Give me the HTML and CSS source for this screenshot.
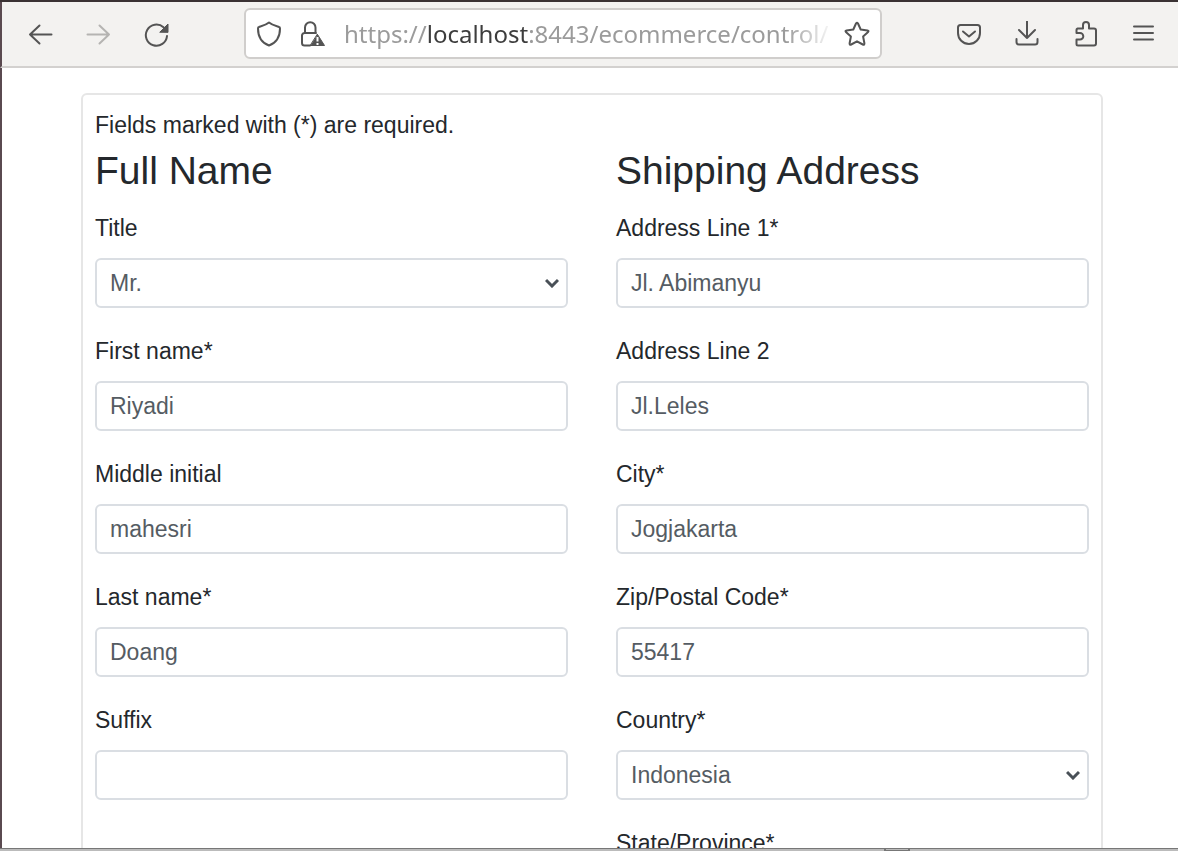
FILE: index.html
```html
<!DOCTYPE html>
<html lang="en">
<head>
<meta charset="utf-8">
<title>Customer details</title>
<link rel="stylesheet" href="styles.css">
</head>
<body>
<div class="window">
  <header class="toolbar">
    <nav class="tools" aria-label="Navigation">
      <button class="tool" type="button" aria-label="Back"><svg class="icon" viewBox="0 0 26 26"><path d="M24.5 13.5H3M12.5 4.5L3 13.5l9.5 9"/></svg></button>
      <button class="tool tool-disabled" type="button" aria-label="Forward" disabled><svg class="icon" viewBox="0 0 26 26"><path d="M2.5 13.5H24M14.500 4.500L24 13.500l-9.500 9"/></svg></button>
      <button class="tool" type="button" aria-label="Reload"><svg class="icon" viewBox="0 0 26 26"><path d="M24 15A10.600 10.600 0 1 1 20.500 6.200"/><path class="solid" d="M17 11l8-8v8z"/></svg></button>
    </nav>
    <div class="address-bar">
      <button class="mini" type="button" aria-label="Tracking protection"><svg class="icon" viewBox="0 0 26 26"><path d="M13 1.500C10 4 6 5 3 6Q2 6.300 2 7.500C2 16 5 21.500 13 24.500C21 21.500 24 16 24 7.500Q24 6.300 23 6C20 5 16 4 13 1.500z"/></svg></button>
      <button class="mini" type="button" aria-label="Connection is not secure"><svg class="icon" viewBox="0 0 26 26"><path d="M5 12V6.500a5 5 0 0 1 10.500 0V12M10 24.500H4.500a2.500 2.500 0 0 1-2.500-2.500v-7.500A2.500 2.500 0 0 1 4.500 12H16"/><path class="solid" d="M17.500 13.500L24.500 24.500H10.500z"/><path class="mark" d="M17.500 16v4.500M17.500 22v2"/></svg></button>
      <div class="url" role="textbox" aria-label="Address">https://<span class="host">localhost</span>:8443/ecommerce/control/</div>
      <button class="mini" type="button" aria-label="Bookmark this page"><svg class="icon" viewBox="0 0 26 26"><path d="M12 2.500q1-1.500 2 0l2.700 6 6.800.9q1.600.3.600 1.600l-5 4.500 1.300 6.800q.1 2-1.600 1.200L13 20.300l-5.800 3.200q-1.700.8-1.600-1.200L6.900 15.500l-5-4.500q-1-1.300.6-1.600l6.800-.9z"/></svg></button>
    </div>
    <div class="tools">
      <button class="tool" type="button" aria-label="Save to Pocket"><svg class="icon" viewBox="0 0 26 26"><path d="M5 4h16.500q2.500 0 2.500 2.500V12a11 11 0 0 1-22 0V6.500Q2 4 4.500 4zM7 10.500l6 5 6-5"/></svg></button>
      <button class="tool" type="button" aria-label="Downloads"><svg class="icon" viewBox="0 0 26 26"><path d="M13 .5V17M5 9l8 8 8-8M2.500 18v3q0 2.500 2.500 2.500h16q2.500 0 2.500-2.500v-3"/></svg></button>
      <button class="tool" type="button" aria-label="Extensions"><svg class="icon" viewBox="0 0 26 26"><path d="M5.500 7.500H11V4a3 3 0 0 1 6 0v3.500h5q2 0 2 2V22.500q0 2-2 2H6q-1.500 0-1.500-1.500v-4.500H8a3.300 3.300 0 0 0 0-6.600H4.500V9q0-1.500 1.500-1.500z"/></svg></button>
      <button class="tool" type="button" aria-label="Menu"><svg class="icon" viewBox="0 0 26 26"><path d="M4 5.500h19M4 12h19M4 18.500h19"/></svg></button>
    </div>
  </header>
  <main class="page">
    <form class="card">
      <p class="note">Fields marked with (*) are required.</p>
      <div class="columns">
        <section class="column">
          <h2 class="heading">Full Name</h2>
          <div class="field">
            <label class="label" for="title">Title</label>
            <div class="select">
              <select class="control" id="title"><option>Mr.</option><option>Mrs.</option><option>Ms.</option><option>Dr.</option></select>
              <svg class="chevron" viewBox="0 0 14 10"><path d="M1 2l6 6 6-6"/></svg>
            </div>
          </div>
          <div class="field"><label class="label" for="first">First name*</label><input class="control" id="first" type="text" value="Riyadi"></div>
          <div class="field"><label class="label" for="middle">Middle initial</label><input class="control" id="middle" type="text" value="mahesri"></div>
          <div class="field"><label class="label" for="last">Last name*</label><input class="control" id="last" type="text" value="Doang"></div>
          <div class="field"><label class="label" for="suffix">Suffix</label><input class="control" id="suffix" type="text"></div>
        </section>
        <section class="column">
          <h2 class="heading">Shipping Address</h2>
          <div class="field"><label class="label" for="address1">Address Line 1*</label><input class="control" id="address1" type="text" value="Jl. Abimanyu"></div>
          <div class="field"><label class="label" for="address2">Address Line 2</label><input class="control" id="address2" type="text" value="Jl.Leles"></div>
          <div class="field"><label class="label" for="city">City*</label><input class="control" id="city" type="text" value="Jogjakarta"></div>
          <div class="field"><label class="label" for="zip">Zip/Postal Code*</label><input class="control" id="zip" type="text" value="55417"></div>
          <div class="field">
            <label class="label" for="country">Country*</label>
            <div class="select">
              <select class="control" id="country"><option>Indonesia</option></select>
              <svg class="chevron" viewBox="0 0 14 10"><path d="M1 2l6 6 6-6"/></svg>
            </div>
          </div>
          <div class="field"><label class="label" for="state">State/Province*</label><input class="control" id="state" type="text"></div>
        </section>
      </div>
    </form>
  </main>
  <footer class="edge"><span class="edge-tab"></span></footer>
</div>
</body>
</html>
```
FILE: styles.css
```css
* { box-sizing: border-box; }

body {
  margin: 0;
  background: #fff;
  color: #24282c;
  font: 23px/34px "Liberation Sans", Arial, sans-serif;
}

.window {
  display: flex;
  flex-direction: column;
  height: 100vh;
  border-top: 2px solid #3a3233;
}

.toolbar {
  display: flex;
  align-items: center;
  flex: none;
  padding: 6px 6px 7px 9px;
  background: #f3f2f0;
  border-left: 2px solid #5a4a50;
  border-bottom: 2px solid #d3d1cf;
}

.tools { display: flex; }

.tool,
.mini {
  display: flex;
  align-items: center;
  justify-content: center;
  flex: none;
  padding: 0;
  border: 0;
  background: none;
  color: #545454;
}

.tool { width: 58px; height: 50px; }
.tool-disabled { color: #b5b4b2; }

.icon {
  width: 26px;
  height: 26px;
  fill: none;
  stroke: currentColor;
  stroke-width: 2;
  stroke-linecap: round;
  stroke-linejoin: round;
}

.icon .solid { fill: currentColor; stroke-width: 1; }
.icon .mark { stroke: #fff; stroke-linecap: butt; }

.address-bar {
  display: flex;
  align-items: center;
  flex: 1;
  gap: 18px;
  min-width: 0;
  height: 51px;
  margin: 0 58px 0 59px;
  padding: 0 10px;
  background: #fff;
  border: 2px solid #d0cecc;
  border-radius: 6px;
}

.url {
  flex: 1;
  min-width: 0;
  margin-right: -8px;
  overflow: hidden;
  white-space: nowrap;
  color: #9b9b9b;
  font-family: "Noto Sans", sans-serif;
  font-size: 24px;
  -webkit-mask-image: linear-gradient(to left, transparent, #000 48px);
  mask-image: linear-gradient(to left, transparent, #000 48px);
}

.host { color: #3d3d3d; }

.page {
  flex: 1;
  min-height: 0;
  overflow: hidden;
  padding: 25px 75px 0 79px;
  border-left: 2px solid #5a4a50;
}

.card {
  padding: 13px 12px;
  border: 2px solid #e6e6e6;
  border-radius: 6px;
}

.note { margin: 0 0 5px; }

.columns {
  display: grid;
  grid-template-columns: 1fr 1fr;
  gap: 48px;
}

.heading {
  margin: 0 0 16px;
  font-size: 39px;
  font-weight: 400;
  line-height: 48px;
}

.field {
  display: flex;
  flex-direction: column;
  gap: 13px;
  margin-bottom: 26px;
}

.control {
  appearance: none;
  width: 100%;
  height: 50px;
  margin: 0;
  padding: 0 13px;
  background: #fff;
  border: 2px solid #dadee3;
  border-radius: 6px;
  color: #555c63;
  font: inherit;
}

.select { display: grid; align-items: center; }
.select .control,
.chevron { grid-area: 1 / 1; }

.chevron {
  justify-self: end;
  width: 14px;
  height: 10px;
  margin-right: 9px;
  fill: none;
  stroke: #495057;
  stroke-width: 3;
  pointer-events: none;
}

.edge {
  display: flex;
  flex: none;
  height: 3px;
  background: #bbb;
  border-top: 1px solid #777;
}

.edge-tab {
  width: 26px;
  margin-left: 75%;
  border: solid #777;
  border-width: 0 2px 1px;
}
```
